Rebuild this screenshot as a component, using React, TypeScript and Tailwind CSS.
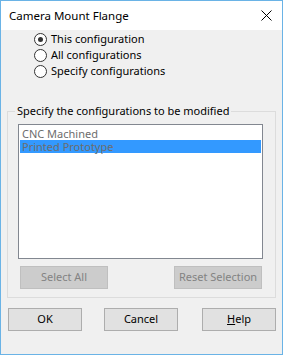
import React from "react";

const font = { fontFamily: '"Noto Sans", "Liberation Sans", sans-serif' };

function Radio({ checked, label }: { checked?: boolean; label: string }) {
  return (
    <div className="flex h-[16px] items-center">
      <div className="flex h-[13px] w-[13px] items-center justify-center rounded-full border border-[#333333] bg-white">
        {checked && <div className="h-[5px] w-[5px] rounded-full bg-[#333333]" />}
      </div>
      <span className="ml-[4px] text-[11px] leading-[16px] text-black">{label}</span>
    </div>
  );
}

export default function App() {
  return (
    <div
      className="flex h-[355px] w-[283px] flex-col border border-[#6ab3e6] bg-[#f0f0f0] text-[11px]"
      style={font}
    >
      <div className="flex h-[29px] items-center justify-between bg-white pl-[8px] pr-[10px]">
        <span className="text-[11.5px] text-black">Camera Mount Flange</span>
        <svg width="11" height="11" viewBox="0 0 11 11">
          <path d="M0.5 0.5 L10.5 10.5 M10.5 0.5 L0.5 10.5" stroke="#000" strokeWidth="1" />
        </svg>
      </div>
      <div className="flex flex-col pl-[33px] pt-[1px]">
        <Radio checked label="This configuration" />
        <Radio label="All configurations" />
        <Radio label="Specify configurations" />
      </div>
      <div className="relative ml-[6px] mt-[32px] h-[187px] w-[269px] border border-[#dcdcdc] pl-[10px] pt-[12px]">
        <span className="absolute left-[7px] top-[-9px] bg-[#f0f0f0] px-[2px] text-[11px] leading-[16px] text-black">
          Specify the configurations to be modified
        </span>
        <div className="flex h-[135px] w-[245px] flex-col border border-[#828790] bg-white px-[1px] pt-[2px]">
          <div className="h-[13px] pl-[2px] text-[11px] leading-[13px] text-[#6d6d6d]">
            CNC Machined
          </div>
          <div className="h-[13px] bg-[#3399ff] pl-[2px] text-[11px] leading-[13px] text-[#6d6d6d]">
            Printed Prototype
          </div>
        </div>
        <div className="mt-[7px] flex w-[244px] justify-between pl-[2px]">
          <div className="flex h-[23px] w-[88px] items-center justify-center border border-[#bfbfbf] bg-[#cccccc] text-[11px] text-[#838383]">
            Select All
          </div>
          <div className="flex h-[23px] w-[88px] items-center justify-center border border-[#bfbfbf] bg-[#cccccc] text-[11px] text-[#838383]">
            Reset Selection
          </div>
        </div>
      </div>
      <div className="mt-[10px] flex pl-[7px]">
        <div className="flex h-[23px] w-[74px] items-center justify-center border border-[#adadad] bg-[#e1e1e1] text-[11px] text-black">
          OK
        </div>
        <div className="ml-[22px] flex h-[23px] w-[74px] items-center justify-center border border-[#adadad] bg-[#e1e1e1] text-[11px] text-black">
          Cancel
        </div>
        <div className="ml-[24px] flex h-[23px] w-[74px] items-center justify-center border border-[#adadad] bg-[#e1e1e1] text-[11px] text-black">
          <span>
            <u>H</u>elp
          </span>
        </div>
      </div>
    </div>
  );
}
